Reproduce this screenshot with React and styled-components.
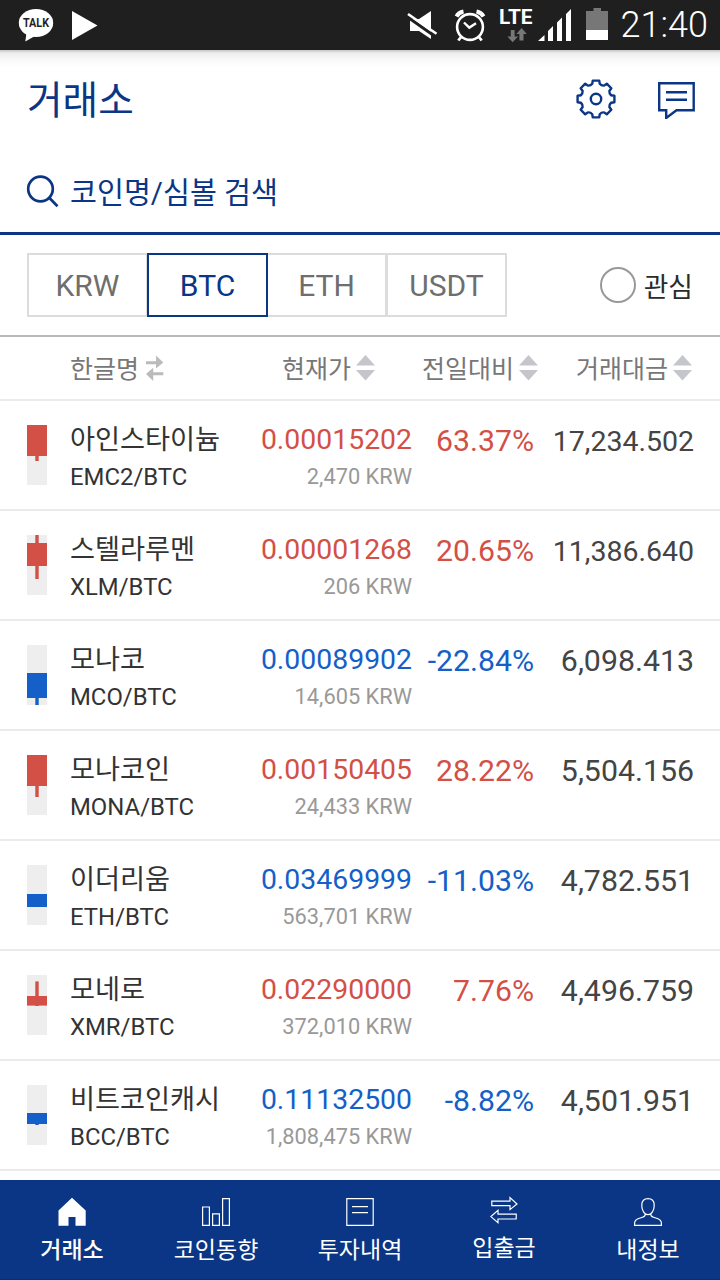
import React, { useState } from "react";
import styled, { createGlobalStyle } from "styled-components";

const NAVY = "#0a3685";
const RED = "#d25046";
const BLUE = "#1460c8";

const GlobalStyle = createGlobalStyle`
  * {
    box-sizing: border-box;
  }

  body {
    margin: 0;
    background: #fff;
    font-family: Roboto, "Noto Sans CJK KR", sans-serif;
  }

  button {
    margin: 0;
    padding: 0;
    border: 0;
    background: none;
    font: inherit;
    color: inherit;
  }

  svg {
    display: block;
    flex: none;
  }
`;

const Screen = styled.div`
  display: flex;
  flex-direction: column;
  width: 720px;
  height: 1280px;
  overflow: hidden;
  background: #fff;
`;

const StatusBar = styled.div`
  display: flex;
  justify-content: space-between;
  flex: none;
  height: 50px;
  background: #1f1f1f;
  color: #fff;
`;

const StatusGroup = styled.div`
  display: flex;
`;

const Clock = styled.span`
  flex: none;
  width: 110px;
  padding-right: 12px;
  font-size: 36px;
  font-weight: 300;
  line-height: 50px;
  text-align: right;
`;

const Header = styled.header`
  display: flex;
  align-items: center;
  justify-content: space-between;
  flex: none;
  height: 100px;
  padding: 0 24px 0 27px;
  background: linear-gradient(#c4c4c4 0, #ececec 3px, #f8f8f8 9px, #fff 17px);
`;

const Title = styled.h1`
  margin: 0;
  padding-top: 1px;
  color: ${NAVY};
  font-size: 38.7px;
  font-weight: 400;
  line-height: 99px;
`;

const HeaderActions = styled.div`
  display: flex;
  gap: 40px;
  padding-bottom: 2px;
`;

const Search = styled.div`
  display: flex;
  align-items: center;
  gap: 11px;
  flex: none;
  height: 85px;
  padding: 0 27px 0 26px;
  border-bottom: 3px solid ${NAVY};
  color: ${NAVY};
  font-size: 29.3px;
`;

const SearchText = styled.span`
  padding-bottom: 2px;
`;

const Filters = styled.div`
  display: flex;
  align-items: center;
  justify-content: space-between;
  flex: none;
  height: 102px;
  padding: 0 27px;
  border-bottom: 2px solid #b9b9b9;
`;

const Markets = styled.div`
  display: flex;
`;

const Market = styled.button`
  position: relative;
  width: 121px;
  height: 64px;
  margin-right: ${({ $active }) => ($active ? -1 : 0)}px;
  border: 2px solid ${({ $active }) => ($active ? NAVY : "#dcdcdc")};
  color: ${({ $active }) => ($active ? NAVY : "#6e6e6e")};
  font-size: 30px;
  z-index: ${({ $active }) => ($active ? 1 : 0)};

  & + & {
    margin-left: -1px;
  }
`;

const Favorite = styled.label`
  display: flex;
  align-items: center;
  gap: 8px;
  color: #2b2b2b;
  font-size: 26.8px;
`;

const Circle = styled.span`
  width: 36px;
  height: 36px;
  border: 2px solid #999;
  border-radius: 50%;
`;

const columns = `
  display: grid;
  grid-template-columns: 43px 150px 192px 122px 160px;
  flex: none;
  padding-left: 27px;
  border-bottom: 2px solid #ebebeb;
`;

const HeadRow = styled.div`
  ${columns}
  height: 64px;
  color: #777;
  font-size: 25px;
  line-height: 58px;
`;

const HeadCell = styled.div`
  display: flex;
  align-items: center;
  justify-content: ${({ $left }) => ($left ? "flex-start" : "flex-end")};
  gap: ${({ $left }) => ($left ? 7 : 5)}px;
  grid-column: ${({ $left }) => ($left ? 2 : "auto")};
  margin-right: ${({ $inset }) => $inset || 0}px;
`;

const HeadText = styled.span`
  padding-top: 4px;
`;

const Row = styled.div`
  ${columns}
  height: 110px;
  padding-top: 17px;
  white-space: nowrap;
`;

const CandleBox = styled.div`
  padding-top: 7px;
`;

const Name = styled.div`
  padding-top: 2px;
  color: #333;
  font-size: 27.2px;
  line-height: 41px;
`;

const Pair = styled.div`
  color: #333;
  font-size: 23.9px;
  line-height: 33px;
`;

const Price = styled.div`
  color: ${({ $color }) => $color};
  font-size: 28.4px;
  line-height: 43px;
  text-align: right;
`;

const Krw = styled.div`
  color: #999;
  font-size: 21.8px;
  line-height: 31px;
  text-align: right;
`;

const Change = styled.div`
  color: ${({ $color }) => $color};
  font-size: 30.2px;
  line-height: 46px;
  text-align: right;
`;

const Volume = styled.div`
  color: #444;
  font-size: ${({ $long }) => ($long ? 28.5 : 30.3)}px;
  line-height: ${({ $long }) => ($long ? 48 : 46)}px;
  text-align: right;
`;

const NavBar = styled.nav`
  display: grid;
  grid-template-columns: repeat(5, 1fr);
  flex: none;
  height: 100px;
  margin-top: auto;
  border-bottom: 1px solid #072d74;
  background: ${NAVY};
`;

const NavItem = styled.button`
  display: flex;
  flex-direction: column;
  align-items: center;
  padding-top: 17px;
  color: #fff;
  font-size: 23px;
  font-weight: ${({ $active }) => ($active ? 500 : 400)};
  line-height: 34px;
`;

const NavLabel = styled.span`
  margin-top: ${({ $raised }) => ($raised ? 6 : 8)}px;
`;

const coins = [
  { name: "아인스타이늄", symbol: "EMC2", price: "0.00015202", krw: "2,470", change: "63.37%", volume: "17,234.502", up: true, body: [0, 31], wick: [31, 36] },
  { name: "스텔라루멘", symbol: "XLM", price: "0.00001268", krw: "206", change: "20.65%", volume: "11,386.640", up: true, body: [8, 31], wick: [0, 44] },
  { name: "모나코", symbol: "MCO", price: "0.00089902", krw: "14,605", change: "-22.84%", volume: "6,098.413", up: false, body: [28, 53], wick: [53, 60] },
  { name: "모나코인", symbol: "MONA", price: "0.00150405", krw: "24,433", change: "28.22%", volume: "5,504.156", up: true, body: [0, 31], wick: [31, 42] },
  { name: "이더리움", symbol: "ETH", price: "0.03469999", krw: "563,701", change: "-11.03%", volume: "4,782.551", up: false, body: [29, 42], wick: [29, 42] },
  { name: "모네로", symbol: "XMR", price: "0.02290000", krw: "372,010", change: "7.76%", volume: "4,496.759", up: true, body: [21, 30.6], wick: [6.4, 31] },
  { name: "비트코인캐시", symbol: "BCC", price: "0.11132500", krw: "1,808,475", change: "-8.82%", volume: "4,501.951", up: false, body: [28, 39], wick: [39, 40] },
];

// eight teeth around a ring, one tooth every 45 degrees
const gearPath = () => {
  const at = (radius, angle) => {
    const rad = ((angle - 90) * Math.PI) / 180;

    return `${(20 + radius * Math.cos(rad)).toFixed(2)} ${(20 + radius * Math.sin(rad)).toFixed(2)}`;
  };

  const teeth = [];

  for (let i = 0; i < 8; i++) {
    const a = i * 45;

    teeth.push(`${i ? "L" : "M"}${at(15.6, a - 14)}L${at(18.7, a - 10)}L${at(18.7, a + 10)}L${at(15.6, a + 14)}Q${at(14.2, a + 22.5)} ${at(15.6, a + 31)}`);
  }

  return `${teeth.join("")}Z`;
};

function GearIcon() {
  return (
    <svg width="40" height="40" viewBox="0 0 40 40" fill="none" stroke={NAVY} strokeWidth="2.4" strokeLinejoin="round">
      <path d={gearPath()} />
      <circle cx="20" cy="20" r="5.2" />
    </svg>
  );
}

function MessageIcon() {
  return (
    <svg width="40" height="40" viewBox="0 0 40 40" fill="none" stroke={NAVY} strokeWidth="2.4">
      <path d="M3.2 4.2H37.7V31.2H20.5L10.2 39V31.2H3.2Z" />
      <path d="M10 13.3H31M10 20.7H31" />
    </svg>
  );
}

function SearchIcon() {
  return (
    <svg width="33" height="33" viewBox="0 0 33 33" fill="none" stroke={NAVY} strokeWidth="2.7">
      <circle cx="14.5" cy="14" r="12.3" />
      <path d="M23 22.5L31.5 31.2" />
    </svg>
  );
}

function SortIcon() {
  return (
    <svg width="19" height="26" viewBox="0 0 19 26" fill="#c5c6cc">
      <path d="M9.5 0L19 10.5H0ZM0 15H19L9.5 25.5Z" />
    </svg>
  );
}

function SwapIcon() {
  return (
    <svg width="18" height="26" viewBox="0 0 18 26" fill="#bbb">
      <path d="M0 6.2H10V.6L17.3 7.4L10 13.6V9.2H0ZM17.3 20.2H7.2V26L0 19L7.2 12.8V17.2H17.3Z" />
    </svg>
  );
}

function Candle({ color, body, wick }) {
  return (
    <svg width="20" height="60" viewBox="0 0 20 60">
      <rect width="20" height="60" fill="#eee" />
      <rect x="8.3" y={wick[0]} width="3.4" height={wick[1] - wick[0]} fill={color} />
      <rect y={body[0]} width="20" height={body[1] - body[0]} fill={color} />
    </svg>
  );
}

function LeftStatus() {
  return (
    <svg width="110" height="50" viewBox="0 0 110 50" fill="#fff">
      <ellipse cx="36" cy="23" rx="17.2" ry="14" />
      <path d="M26.5 33L25.3 41.5L35 36Z" />
      <text x="36" y="27.4" fill="#1f1f1f" fontFamily="Roboto" fontSize="12" fontWeight="700" textAnchor="middle" textLength="26" lengthAdjust="spacingAndGlyphs">TALK</text>
      <path d="M72 11V40L97.5 25.5Z" />
    </svg>
  );
}

function RightStatus() {
  return (
    <svg width="210" height="50" viewBox="400 0 210 50" fill="#fff">
      <path d="M410 19H419L431 11V39L419 31H410Z" />
      <path d="M406.5 16.3L435.5 36.8" stroke="#1f1f1f" strokeWidth="3" />
      <path d="M408 14L436.5 33.8" stroke="#fff" strokeWidth="2.6" />
      <g fill="none" stroke="#fff">
        <circle cx="470" cy="27" r="12.9" strokeWidth="2.6" />
        <path d="M464 22.5L469.3 27.6L476 23.2" strokeWidth="2.4" />
        <path d="M456.5 16.5Q458.5 12.5 463.5 11.5M476.5 11.5Q481.5 12.5 483.5 16.5" strokeWidth="4" />
        <path d="M461.5 36.5L458.3 40.5M478.5 36.5L481.7 40.5" strokeWidth="2.8" />
      </g>
      <text x="499" y="24" fontFamily="Roboto" fontSize="20" fontWeight="700" textLength="33.5" lengthAdjust="spacingAndGlyphs">LTE</text>
      <path d="M510.8 30H514.6V36.5H518L512.7 42.3L507.4 36.5H510.8ZM519.4 40.5V34H516.4L521.6 28L526.8 34H523.5V40.5Z" fill="#777" />
      <path d="M538 41L544.5 35V41ZM548 41V31L553 26V41ZM557 41V22.5L562 17.5V41ZM566 41V14L571 9V41Z" />
      <path d="M586 11H593.5V8H601V11H608V30H586Z" fill="#777" />
      <path d="M586 30H608V40H586Z" />
    </svg>
  );
}

const navIcons = {
  home: <path d="M14 .7L27.7 13.5V28.7H17.5V20H10.5V28.7H.5V13.5Z" fill="#fff" stroke="none" />,
  chart: <path d="M.6 10H7.4V28.4H.6ZM10.6 16.8H17.4V28.4H10.6ZM20.6 1.6H27.4V28.4H20.6Z" />,
  history: <path d="M.8 1.6H27.2V28.4H.8ZM6 9.6H22M6 15.6H22" />,
  transfer: <path d="M1.8 4.2H20V.6L27 7L20 12.6V8.6H1.8ZM26.2 17.1H8V13.4L.9 19.6L8 25.6V22H26.2Z" />,
  profile: <path d="M14 1.6C10 1.6 7.8 4 7.8 7.8C7.8 12 9 15 11.3 16.8C11.5 18.6 10.8 19.5 8.5 20.2L4 21.8C1.5 22.8 .6 24 .6 26.5V28.4H27.4V26.5C27.4 24 26.5 22.8 24 21.8L19.5 20.2C17.2 19.5 16.5 18.6 16.7 16.8C19 15 20.2 12 20.2 7.8C20.2 4 18 1.6 14 1.6ZM11.3 16.8Q14 18.6 16.7 16.8" />,
};

const navItems = [
  { icon: "home", label: "거래소" },
  { icon: "chart", label: "코인동향" },
  { icon: "history", label: "투자내역" },
  { icon: "transfer", label: "입출금" },
  { icon: "profile", label: "내정보" },
];

function CoinRow({ coin }) {
  const color = coin.up ? RED : BLUE;

  return (
    <Row>
      <CandleBox>
        <Candle color={color} body={coin.body} wick={coin.wick} />
      </CandleBox>
      <div>
        <Name>{coin.name}</Name>
        <Pair>{coin.symbol}/BTC</Pair>
      </div>
      <div>
        <Price $color={color}>{coin.price}</Price>
        <Krw>{coin.krw} KRW</Krw>
      </div>
      <Change $color={color}>{coin.change}</Change>
      <Volume $long={coin.volume.length > 9}>{coin.volume}</Volume>
    </Row>
  );
}

function App() {
  const [market, setMarket] = useState("BTC");
  const [tab, setTab] = useState("home");

  return (
    <Screen lang="ko">
      <GlobalStyle />
      <StatusBar>
        <LeftStatus />
        <StatusGroup>
          <RightStatus />
          <Clock>21:40</Clock>
        </StatusGroup>
      </StatusBar>
      <Header>
        <Title>거래소</Title>
        <HeaderActions>
          <GearIcon />
          <MessageIcon />
        </HeaderActions>
      </Header>
      <Search>
        <SearchIcon />
        <SearchText>코인명/심볼 검색</SearchText>
      </Search>
      <Filters>
        <Markets>
          {["KRW", "BTC", "ETH", "USDT"].map((item) => (
            <Market key={item} $active={item === market} onClick={() => setMarket(item)}>{item}</Market>
          ))}
        </Markets>
        <Favorite>
          <Circle />
          관심
        </Favorite>
      </Filters>
      <HeadRow>
        <HeadCell $left><HeadText>한글명</HeadText><SwapIcon /></HeadCell>
        <HeadCell $inset={37}><HeadText>현재가</HeadText><SortIcon /></HeadCell>
        <HeadCell $inset={-4}><HeadText>전일대비</HeadText><SortIcon /></HeadCell>
        <HeadCell $inset={2}><HeadText>거래대금</HeadText><SortIcon /></HeadCell>
      </HeadRow>
      {coins.map((coin) => (
        <CoinRow key={coin.symbol} coin={coin} />
      ))}
      <NavBar>
        {navItems.map(({ icon, label }) => (
          <NavItem key={icon} $active={icon === tab} onClick={() => setTab(icon)}>
            <svg width="28" height="29" viewBox="0 0 28 29" fill="none" stroke="#fff" strokeWidth="1.2" overflow="visible">
              {navIcons[icon]}
            </svg>
            <NavLabel $raised={icon === "transfer"}>{label}</NavLabel>
          </NavItem>
        ))}
      </NavBar>
    </Screen>
  );
}

export default App;
